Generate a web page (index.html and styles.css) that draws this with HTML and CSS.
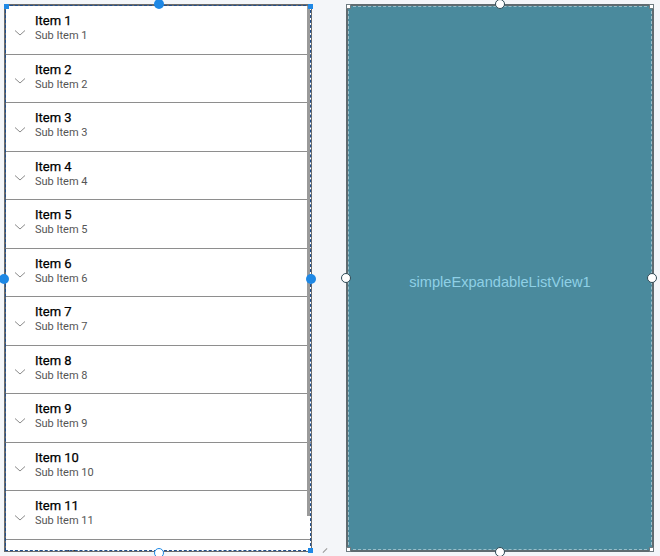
FILE: index.html
```html
<!DOCTYPE html>
<html lang="en">
<head>
  <meta charset="UTF-8" />
  <title>Designer</title>
  <link rel="stylesheet" href="styles.css">
</head>
<body>

  <div class="canvas">
    <div class="panel list-panel">
      <div class="list" id="list"></div>
      <div class="scroll-thumb"></div>
      <span class="sq blue tl"></span>
      <span class="sq blue tr"></span>
      <span class="sq blue br"></span>
      <span class="dot blue top"></span>
      <span class="dot blue left"></span>
      <span class="dot blue right"></span>
      <span class="dot hollow bottom"></span>
    </div>

    <div class="panel view-panel">
      <div class="view-label">simpleExpandableListView1</div>
      <span class="sq white tl"></span>
      <span class="sq white tr"></span>
      <span class="sq white bl"></span>
      <span class="sq white br"></span>
      <span class="dot white top"></span>
      <span class="dot white left"></span>
      <span class="dot white right"></span>
      <span class="dot white bottom"></span>
    </div>
  </div>

  <span class="grip"></span>

  <script>
    const list = document.getElementById('list');
    const chevron = '<svg width="12" height="8" viewBox="0 0 12 8"><path d="M1 1.5 L6 6 L11 1.5" fill="none" stroke="#8a8a8a" stroke-width="1"/></svg>';

    for (let i = 1; i <= 12; i++) {
      list.innerHTML += `
        <div class="row">
          <div class="chev">${chevron}</div>
          <div class="texts">
            <div class="title">Item ${i}</div>
            <div class="sub">Sub Item ${i}</div>
          </div>
        </div>
      `;
    }
  </script>
</body>
</html>
```

FILE: styles.css
```css
* { margin: 0; padding: 0; box-sizing: border-box; }
body {
  background: #f4f6f9;
  font-family: Roboto, "Liberation Sans", sans-serif;
  width: 660px;
  height: 556px;
  overflow: hidden;
  position: relative;
}

.canvas {
  display: flex;
  gap: 34px;
  padding: 4px 0 0 4px;
}

.panel {
  position: relative;
  width: 308px;
  height: 548px;
}

.list-panel {
  background: #fff;
  border: 1px solid #6b6b6b;
  outline: 1px dashed #1f4f8f;
  outline-offset: -2px;
  border-left-width: 2px;
  border-top-width: 2px;
}

.list {
  height: 100%;
  overflow: hidden;
}

.row {
  display: flex;
  align-items: center;
  height: 48.5px;
  border-bottom: 1px solid #8e8e8e;
  padding-left: 8px;
}

.chev {
  width: 12px;
  display: flex;
  margin-top: 6px;
  margin-right: 9px;
}

.texts { margin-top: -3px; }

.title {
  font-size: 13px;
  color: #000;
  line-height: 16px;
  -webkit-text-stroke: 0.25px #000;
}

.sub {
  font-size: 11px;
  color: #555;
  line-height: 14px;
}

.scroll-thumb {
  position: absolute;
  right: 1px;
  top: 0;
  width: 3px;
  height: 510px;
  background: #9a9a9a;
}

.view-panel {
  background: #4a8a9d;
  border: 2px solid #5f6b70;
  outline: 1px dashed rgba(220, 235, 240, 0.55);
  outline-offset: -3px;
  display: flex;
  align-items: center;
  justify-content: center;
}

.view-label {
  color: #8fd0e6;
  font-family: "Liberation Sans", Arial, sans-serif;
  font-size: 14.6px;
  margin-top: 8px;
}

.sq {
  position: absolute;
  width: 5px;
  height: 5px;
}
.sq.blue { background: #1e88e5; }
.sq.white { background: #fff; border: 1px solid #6e7b80; }
.sq.tl { left: -2px; top: -2px; }
.sq.tr { right: -2px; top: -2px; }
.sq.bl { left: -2px; bottom: -2px; }
.sq.br { right: -2px; bottom: -2px; }

.dot {
  position: absolute;
  width: 10px;
  height: 10px;
  border-radius: 50%;
}
.dot.blue { background: #1e88e5; }
.dot.hollow { background: #fff; border: 1px solid #1e88e5; }
.dot.white { background: #fff; border: 1px solid #2f4a55; }
.dot.top { left: calc(50% - 5px); top: -7px; }
.dot.bottom { left: calc(50% - 5px); bottom: -7px; }
.dot.left { left: -7px; top: calc(50% - 5px); }
.dot.right { right: -5px; top: calc(50% - 5px); }

.grip {
  position: absolute;
  left: 322px;
  top: 550px;
  width: 6px;
  height: 1px;
  background: #999;
  transform: rotate(-45deg);
}
```
